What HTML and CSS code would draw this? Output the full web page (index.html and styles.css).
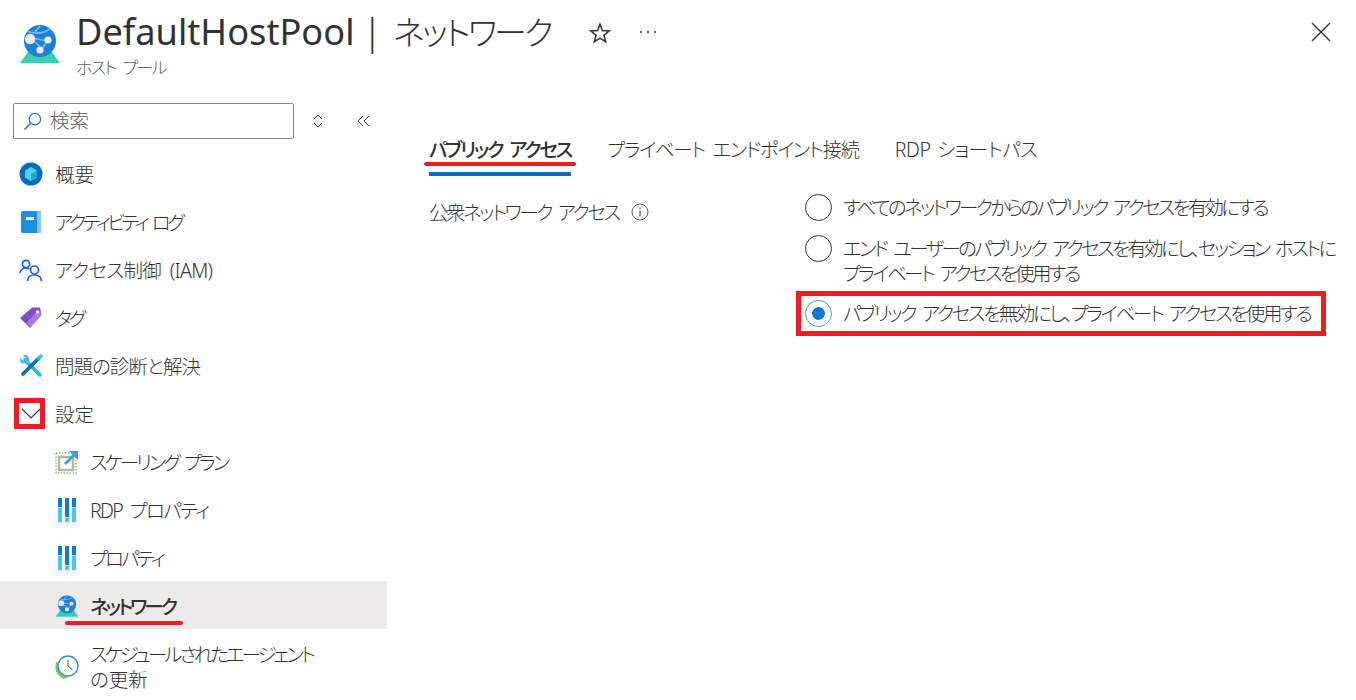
FILE: index.html
```html
<!DOCTYPE html>
<html lang="ja">

<head>
    <meta charset="UTF-8">
    <title>DefaultHostPool | ネットワーク</title>
    <link rel="stylesheet" href="styles.css">
</head>

<body>
    <div class="page">
        <svg width="0" height="0" class="defs">
            <defs>
                <symbol id="icon-globe" viewBox="0 0 42 40">
                    <path d="M1 39 L9 28 H33 L41 39 Z" fill="#3bcdb4" />
                    <circle cx="21" cy="17" r="16" fill="#1b7fdc" />
                    <path d="M8 7 Q20 12 31 5 M15 9 L21 2 M12 14 L24 26 M28 17 L22 27 M13 14 L28 17" stroke="#7db9ec" stroke-width="1.6" fill="none" />
                    <circle cx="11" cy="15" r="5.2" fill="#ececec" />
                    <circle cx="29" cy="16" r="3.6" fill="#ececec" />
                    <circle cx="21" cy="26" r="3.6" fill="#ececec" />
                </symbol>
                <symbol id="icon-sliders" viewBox="0 0 18 24">
                    <rect x="0" y="0" width="4" height="9" fill="#0f78d4" />
                    <rect x="0" y="9" width="4" height="1" fill="#c8e4f2" />
                    <rect x="0" y="10" width="4" height="14" fill="#40c8ee" />
                    <rect x="7" y="0" width="4" height="19" fill="#0f78d4" />
                    <rect x="7" y="20" width="4" height="4" fill="#40c8ee" />
                    <rect x="14" y="0" width="4" height="9" fill="#0f78d4" />
                    <rect x="14" y="9" width="4" height="1" fill="#c8e4f2" />
                    <rect x="14" y="10" width="4" height="14" fill="#40c8ee" />
                </symbol>
            </defs>
        </svg>

        <header class="header">
            <svg class="header-icon"><use href="#icon-globe"></use></svg>
            <div class="header-text">
                <div class="title-row">
                    <h1>DefaultHostPool<span class="title-sep">|</span><span class="title-sub">ネットワーク</span></h1>
                    <svg class="star" viewBox="0 0 20 20">
                        <path d="M10 2 L12.2 7.8 L18.4 8.1 L13.6 12 L15.2 18 L10 14.6 L4.8 18 L6.4 12 L1.6 8.1 L7.8 7.8 Z" fill="none" stroke="#323130" stroke-width="1.4" />
                    </svg>
                    <span class="more">
                        <i></i><i></i><i></i>
                    </span>
                </div>
                <div class="subtitle">ホスト プール</div>
            </div>
            <svg class="close" viewBox="0 0 20 20">
                <path d="M1 1 L19 19 M19 1 L1 19" stroke="#323130" stroke-width="1.4" />
            </svg>
        </header>

        <div class="main">
            <aside class="sidebar">
                <div class="search-row">
                    <div class="search">
                        <svg class="search-icon" viewBox="0 0 20 20">
                            <circle cx="12.5" cy="7.5" r="6" fill="none" stroke="#0f78d4" stroke-width="1.3" />
                            <path d="M8 12 L1.5 18.5" stroke="#0f78d4" stroke-width="1.5" />
                        </svg>
                        <span>検索</span>
                    </div>
                    <svg class="sort" viewBox="0 0 12 14">
                        <path d="M2 5 L6 1 L10 5 M2 9 L6 13 L10 9" fill="none" stroke="#323130" stroke-width="1" />
                    </svg>
                    <svg class="collapse" viewBox="0 0 14 12">
                        <path d="M6 1 L1 6 L6 11 M12 1 L7 6 L12 11" fill="none" stroke="#323130" stroke-width="1" />
                    </svg>
                </div>

                <nav class="nav">
                    <a class="nav-item">
                        <svg class="nav-icon" viewBox="0 0 24 24">
                            <circle cx="12" cy="12" r="11.5" fill="#0a6cbd" />
                            <path d="M12 5 L18 8.5 V15.5 L12 19 L6 15.5 V8.5 Z" fill="#50d4ee" />
                            <path d="M12 12 L18 8.5 V15.5 L12 19 Z" fill="#1ea7dc" />
                        </svg>
                        <span>概要</span>
                    </a>
                    <a class="nav-item">
                        <svg class="nav-icon" viewBox="0 0 24 24">
                            <rect x="2" y="1" width="20" height="22" rx="1.5" fill="#1f8fe0" />
                            <rect x="18" y="1" width="4" height="22" fill="#8cc6ee" />
                            <rect x="7" y="7" width="8" height="3" fill="#fff" />
                        </svg>
                        <span class="sp-35">アクティビティ ログ</span>
                    </a>
                    <a class="nav-item">
                        <svg class="nav-icon" viewBox="0 0 24 24">
                            <g fill="none" stroke="#1267d8" stroke-width="1.7">
                                <circle cx="7" cy="6" r="3.6" />
                                <path d="M1 15 Q2 10 7 10 Q9 10 10.5 11" />
                                <circle cx="15.5" cy="12" r="4" />
                                <path d="M8.5 23 Q9 17 15.5 17 Q22 17 22.5 23" />
                            </g>
                        </svg>
                        <span class="sp-06">アクセス制御 (IAM)</span>
                    </a>
                    <a class="nav-item">
                        <svg class="nav-icon" viewBox="0 0 24 24">
                            <path d="M1 12 L13 1.5 H21 L22.5 9 L11 22 Z" fill="#7f4fc9" />
                            <path d="M8 16 L20 4 L22.5 9 L11 22 Z" fill="#a77fd8" />
                            <circle cx="18.5" cy="6" r="1.7" fill="#fff" />
                        </svg>
                        <span class="sp-35">タグ</span>
                    </a>
                    <a class="nav-item">
                        <svg class="nav-icon" viewBox="0 0 24 24">
                            <path d="M6 6 L21 21" stroke="#25b8d8" stroke-width="3.6" stroke-linecap="round" />
                            <path d="M20 4 L4 20" stroke="#0a6cbd" stroke-width="3.6" stroke-linecap="round" />
                            <path d="M1 4 L5 7.5 L7.5 5 L4 1 Q9 0 10 5 Q10 9 7 9.5 Q0 10 1 4 Z" fill="#3bb6e6" />
                            <path d="M17 4 L22 0 L24 2 L20 7 Z" fill="#3bb6e6" />
                        </svg>
                        <span class="sp-10">問題の診断と解決</span>
                    </a>
                    <a class="nav-item">
                        <svg class="nav-icon chevron" viewBox="0 0 20 12">
                            <path d="M1 1 L10 10 L19 1" fill="none" stroke="#323130" stroke-width="1.2" />
                        </svg>
                        <span>設定</span>
                    </a>
                    <a class="nav-item nav-sub">
                        <svg class="nav-icon" viewBox="0 0 24 24">
                            <rect x="1" y="3" width="20" height="20" fill="none" stroke="#8fc640" stroke-width="1.5" stroke-dasharray="1.5 1.5" />
                            <rect x="4" y="7" width="14" height="13" fill="none" stroke="#b5b5b5" stroke-width="2.5" />
                            <path d="M10 14 L20 4" stroke="#3b9fe8" stroke-width="3" />
                            <path d="M14 1 H23 V10 Z" fill="#3b9fe8" />
                        </svg>
                        <span class="sp-30">スケーリング プラン</span>
                    </a>
                    <a class="nav-item nav-sub">
                        <svg class="nav-icon"><use href="#icon-sliders"></use></svg>
                        <span class="sp-16">RDP プロパティ</span>
                    </a>
                    <a class="nav-item nav-sub">
                        <svg class="nav-icon"><use href="#icon-sliders"></use></svg>
                        <span class="sp-28">プロパティ</span>
                    </a>
                    <a class="nav-item nav-sub active">
                        <svg class="nav-icon"><use href="#icon-globe"></use></svg>
                        <span class="sp-30">ネットワーク</span>
                    </a>
                    <a class="nav-item nav-sub nav-tall">
                        <svg class="nav-icon" viewBox="0 0 24 24">
                            <path d="M1 7 Q-2 19 9 24 L13 22 Q3 19 4 8 Z" fill="#7cc83a" />
                            <circle cx="13" cy="11" r="10" fill="#fff" stroke="#2f8fe0" stroke-width="1.4" />
                            <path d="M13 5 V11 L17.5 15" fill="none" stroke="#555" stroke-width="1" />
                        </svg>
                        <span><span class="sp-30">スケジュールされたエージェント</span><br>の更新</span>
                    </a>
                </nav>
            </aside>

            <section class="content">
                <div class="tabs">
                    <div class="tab active sp-22">パブリック アクセス</div>
                    <div class="tab sp-14">プライベート エンドポイント接続</div>
                    <div class="tab sp-06 tab-tight">RDP ショートパス</div>
                </div>

                <div class="form-row">
                    <div class="form-label">
                        <span class="sp-25">公衆ネットワーク アクセス</span>
                        <svg class="info" viewBox="0 0 18 18">
                            <circle cx="9" cy="9" r="8" fill="none" stroke="#605e5c" stroke-width="1" />
                            <rect x="8.4" y="7.5" width="1.3" height="6" fill="#605e5c" />
                            <rect x="8.4" y="4.5" width="1.3" height="1.5" fill="#605e5c" />
                        </svg>
                    </div>
                    <div class="radios">
                        <div class="radio-item">
                            <span class="radio"></span>
                            <span class="sp-28">すべてのネットワークからのパブリック アクセスを有効にする</span>
                        </div>
                        <div class="radio-item">
                            <span class="radio"></span>
                            <span class="sp-26">エンド ユーザーのパブリック アクセスを有効にし、セッション ホストに<br>プライベート アクセスを使用する</span>
                        </div>
                        <div class="radio-item">
                            <span class="radio checked"></span>
                            <span class="sp-24">パブリック アクセスを無効にし、プライベート アクセスを使用する</span>
                        </div>
                    </div>
                </div>
            </section>
        </div>

        <!-- red markup drawn over the screenshot -->
        <div class="mark mark-chevron"></div>
        <div class="mark mark-radio"></div>
        <div class="mark-line mark-tab"></div>
        <div class="mark-line mark-nav"></div>
    </div>
</body>

</html>
```

FILE: styles.css
```css
body {
    margin: 0;
    padding: 0;
    background-color: #fff;
    color: #323130;
    font-family: "Noto Sans", "Noto Sans CJK JP", sans-serif;
    font-feature-settings: "palt";
    font-size: 19.5px;
    font-weight: 300;
    word-spacing: 4px;
}

.page {
    position: relative;
    width: 1356px;
    height: 700px;
    overflow: hidden;
}

.defs {
    position: absolute;
}

/* Meiryo UI kana are narrower than Noto, so tighten per string */
.sp-06 { letter-spacing: -0.6px; }
.sp-10 { letter-spacing: -1px; }
.sp-14 { letter-spacing: -1.4px; }
.sp-16 { letter-spacing: -1.6px; }
.sp-22 { letter-spacing: -2.2px; }
.sp-24 { letter-spacing: -2.4px; }
.sp-25 { letter-spacing: -2.5px; }
.sp-26 { letter-spacing: -2.65px; }
.sp-28 { letter-spacing: -2.8px; }
.sp-30 { letter-spacing: -3px; }
.sp-35 { letter-spacing: -3.5px; }

.header {
    display: flex;
    height: 96px;
    box-sizing: border-box;
    padding: 8px 25px 0 19px;
}

.header-icon {
    width: 42px;
    height: 40px;
    margin-top: 16px;
    margin-right: 15px;
}

.header-text {
    flex: 1;
}

.title-row {
    display: flex;
    align-items: center;
    height: 48px;
}

h1 {
    margin: 0;
    font-size: 36.2px;
    font-weight: 400;
    line-height: 48px;
    white-space: nowrap;
    word-spacing: 0;
}

.title-sep {
    margin: 0 11px 0 8px;
    font-weight: 300;
}

.title-sub {
    font-weight: 300;
    font-size: 33px;
    letter-spacing: -2.8px;
}

.star {
    width: 22px;
    height: 22px;
    margin-left: 38px;
    margin-top: 2px;
}

.more {
    display: flex;
    gap: 5px;
    margin-left: 29px;
}

.more i {
    width: 2px;
    height: 2px;
    background-color: #323130;
    border-radius: 50%;
}

.subtitle {
    font-size: 17px;
    line-height: 24px;
    color: #605e5c;
    letter-spacing: -1.7px;
}

.close {
    width: 20px;
    height: 20px;
    margin-top: 14px;
}

.main {
    display: flex;
}

.sidebar {
    width: 387px;
    flex-shrink: 0;
}

.search-row {
    display: flex;
    align-items: center;
    height: 36px;
    margin: 7px 0 10px 13px;
}

.search {
    display: flex;
    align-items: center;
    width: 281px;
    height: 36px;
    box-sizing: border-box;
    border: 1px solid #8a8886;
    border-radius: 2px;
    padding-left: 9px;
    padding-bottom: 4px;
    color: #605e5c;
}

.search-icon {
    width: 19px;
    height: 19px;
    margin-right: 8px;
    margin-top: 4px;
}

.sort {
    width: 12px;
    height: 14px;
    margin-left: 18px;
}

.collapse {
    width: 14px;
    height: 12px;
    margin-left: 33px;
}

.nav-item {
    display: flex;
    align-items: center;
    height: 48px;
    box-sizing: border-box;
    padding-top: 2px;
    padding-left: 19px;
    line-height: 25px;
}

.nav-icon {
    width: 24px;
    height: 24px;
    flex-shrink: 0;
    margin-right: 12px;
}

.chevron {
    height: 12px;
}

.nav-sub {
    padding-left: 55px;
}

.nav-sub .nav-icon {
    margin-right: 11px;
}

.nav-tall {
    height: 74px;
}

.active.nav-item {
    background-color: #edebe9;
    font-weight: 500;
}

.content {
    flex: 1;
    padding-left: 42px;
}

.tabs {
    display: flex;
    gap: 36px;
    height: 80px;
    padding-top: 39px;
    box-sizing: border-box;
    margin-bottom: 19px;
}

.tab {
    height: 41px;
    line-height: 30px;
    box-sizing: border-box;
    white-space: nowrap;
}

.tab-tight {
    word-spacing: 2px;
    letter-spacing: -0.4px;
}

.tab.active {
    border-bottom: 4px solid #0f6cbd;
    font-weight: 500;
}

.form-row {
    display: flex;
}

.form-label {
    display: flex;
    align-items: center;
    width: 376px;
    height: 25px;
    flex-shrink: 0;
    gap: 13px;
    margin-top: 4px;
}

.info {
    width: 18px;
    height: 18px;
}

.radios {
    display: flex;
    flex-direction: column;
    gap: 15px;
    width: 520px;
}

.radio-item {
    display: flex;
    gap: 11px;
    line-height: 25px;
    white-space: nowrap;
}

.radio {
    width: 27px;
    height: 27px;
    flex-shrink: 0;
    box-sizing: border-box;
    border: 1px solid #323130;
    border-radius: 50%;
    margin-top: -1px;
}

.radio.checked {
    border-color: #3a96dd;
    background-image: radial-gradient(circle, #0f78d4 0, #0f78d4 6px, transparent 6.6px);
}

/* annotations */
.mark {
    position: absolute;
    box-sizing: border-box;
    border: 5px solid #ed1c24;
}

.mark-chevron {
    left: 14px;
    top: 398px;
    width: 31px;
    height: 31px;
}

.mark-radio {
    left: 796px;
    top: 291px;
    width: 530px;
    height: 45px;
}

.mark-line {
    position: absolute;
    height: 4px;
    background-color: #ed1c24;
    border-radius: 2px;
}

.mark-tab {
    left: 424px;
    top: 162px;
    width: 152px;
}

.mark-nav {
    left: 65px;
    top: 621px;
    width: 118px;
}
```
